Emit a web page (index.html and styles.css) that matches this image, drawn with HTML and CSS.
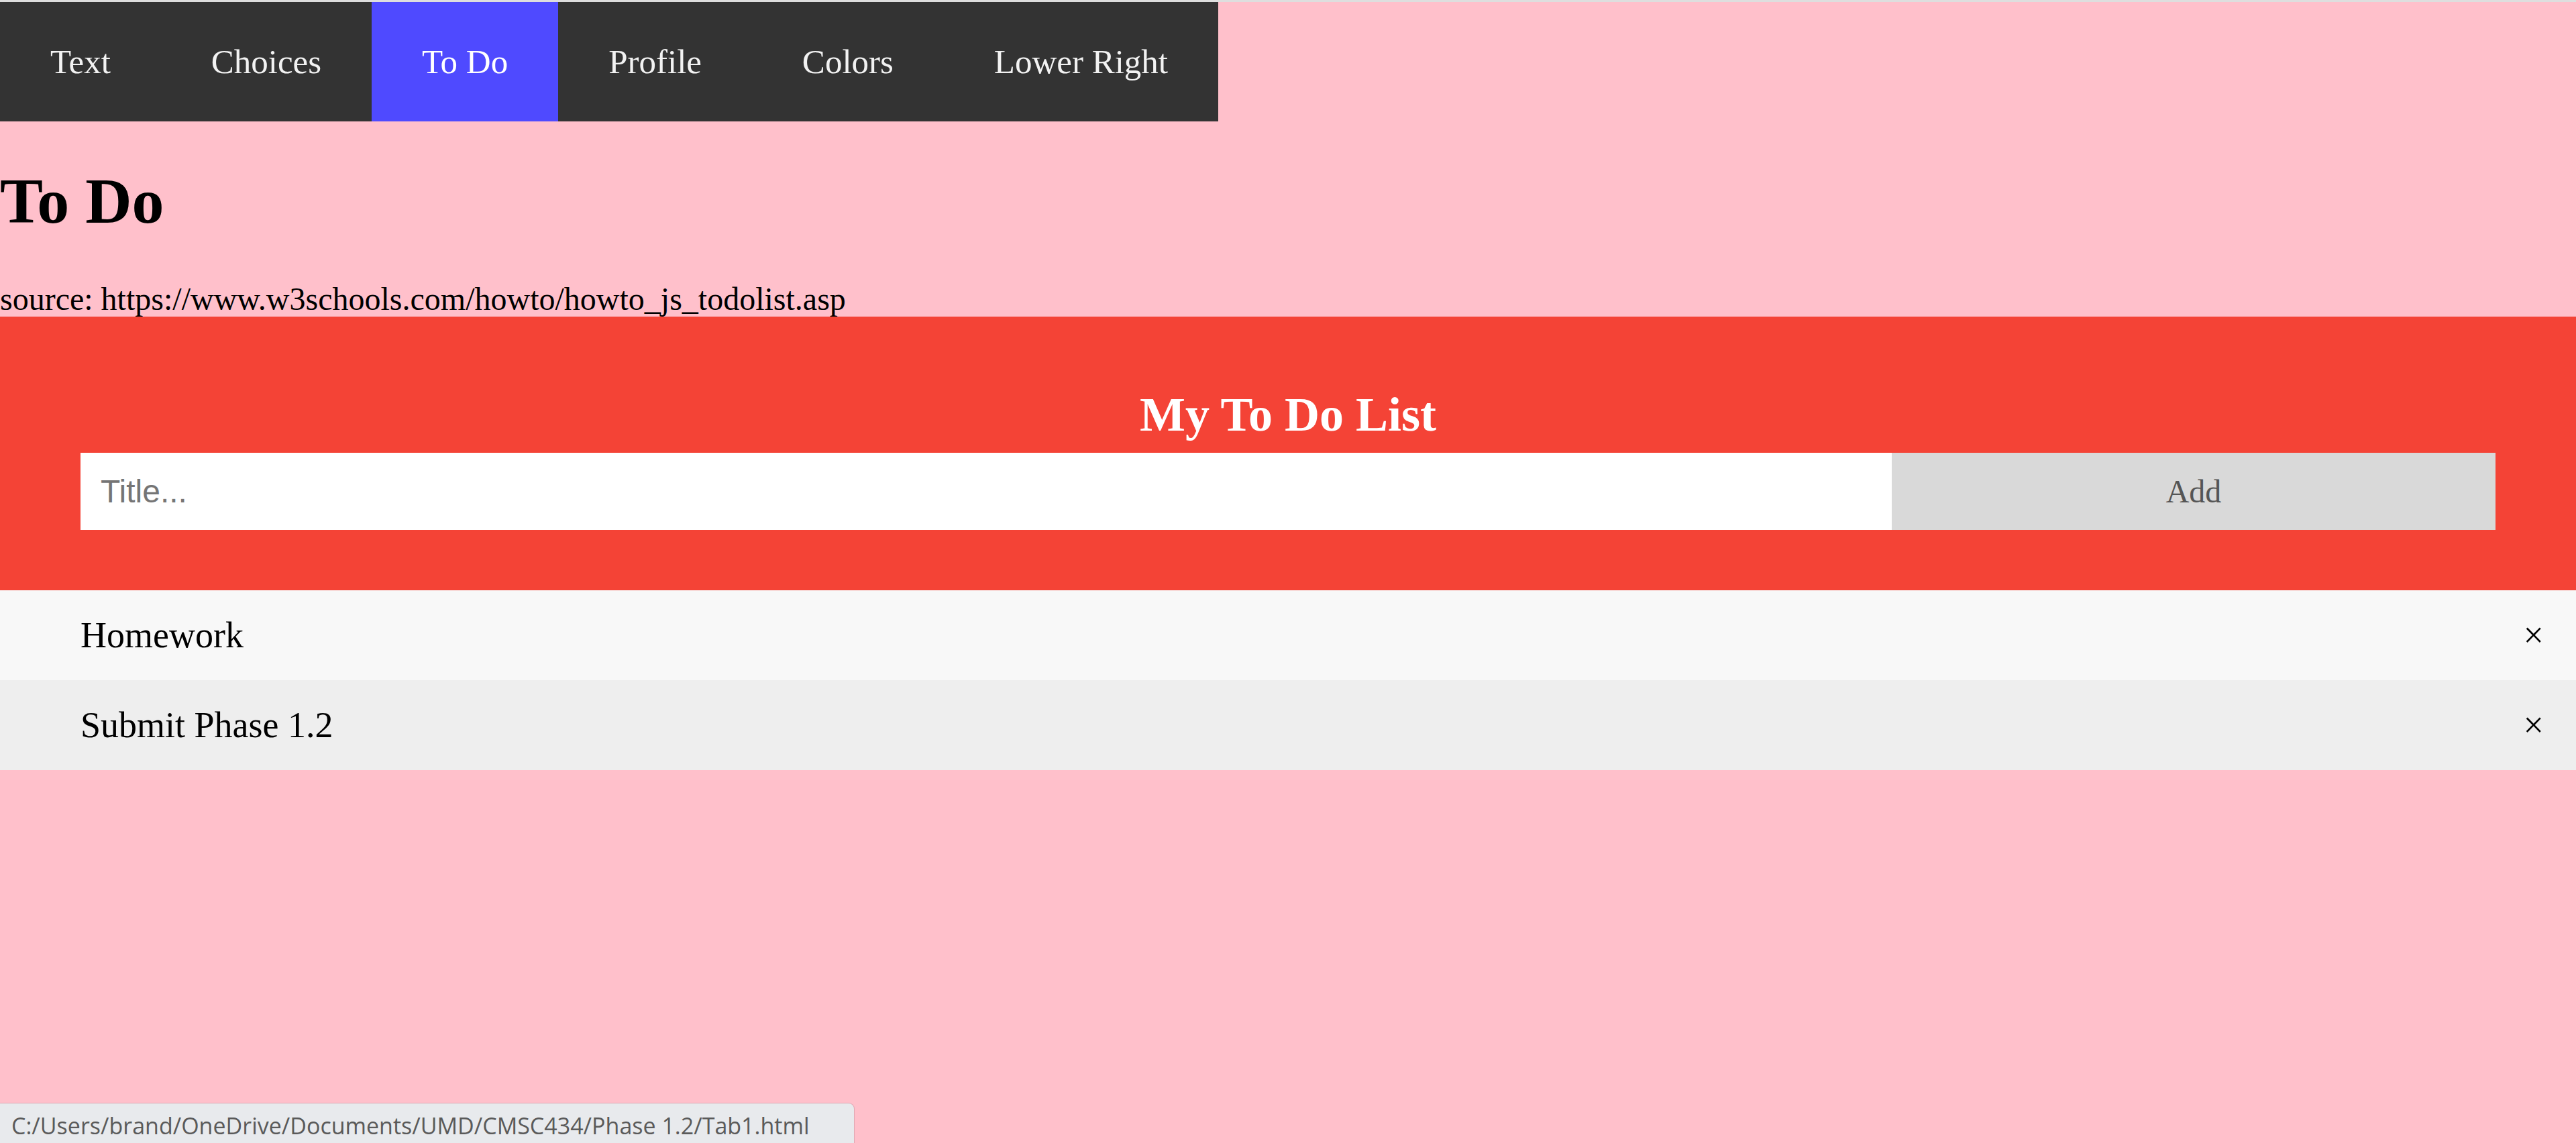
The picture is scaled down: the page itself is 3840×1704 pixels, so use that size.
FILE: index.html
```html
<!DOCTYPE html>
<html>
<head>
<meta charset="utf-8">
<title>Tab1</title>
<link rel="stylesheet" href="styles.css">
</head>
<body>
<div class="chrome-strip"></div>
<nav class="topnav">
  <a class="tab">Text</a>
  <a class="tab">Choices</a>
  <a class="tab active">To Do</a>
  <a class="tab">Profile</a>
  <a class="tab">Colors</a>
  <a class="tab">Lower Right</a>
</nav>
<h1 class="page-title">To Do</h1>
<div class="source">source: https://www.w3schools.com/howto/howto_js_todolist.asp</div>
<div class="header">
  <h2 class="header-title">My To Do List</h2>
  <div class="add-row">
    <input class="title-input" type="text" placeholder="Title...">
    <span class="add-btn">Add</span>
  </div>
</div>
<ul class="todo-list">
  <li class="todo-item">Homework<span class="close">×</span></li>
  <li class="todo-item">Submit Phase 1.2<span class="close">×</span></li>
</ul>
<div class="status-bubble">C:/Users/brand/OneDrive/Documents/UMD/CMSC434/Phase 1.2/Tab1.html</div>
</body>
</html>
```
FILE: styles.css
```css
html, body {
  margin: 0;
  padding: 0;
}
body {
  background: #ffc0cb;
  font-family: "Liberation Serif", "Times New Roman", serif;
  color: #000;
  height: 1704px;
  overflow: hidden;
  position: relative;
}
.chrome-strip {
  height: 3px;
  background: #dedede;
}
.topnav {
  display: flex;
  width: 1816px;
  background: #333333;
}
.tab {
  padding: 60px 0;
  flex: 1 1 auto;
  text-align: center;
  font-size: 51px;
  line-height: 58px;
  color: #f2f2f2;
  padding-left: 74px;
  padding-right: 74px;
}
.tab.active {
  background: #4f4aff;
  color: #ffffff;
}
.page-title {
  font-size: 96px;
  font-weight: bold;
  margin: 64px 0 64px 0;
  line-height: 110px;
}
.source {
  font-size: 48px;
  line-height: 53px;
}
.header {
  background: #f44336;
  padding: 90px 120px;
  color: #fff;
  text-align: center;
}
.header-title {
  margin: 15px;
  font-size: 72px;
  line-height: 83px;
  font-weight: bold;
}
.add-row {
  display: flex;
}
.title-input {
  box-sizing: border-box;
  width: 75%;
  margin: 0;
  border: none;
  border-radius: 0;
  padding: 30px 30px;
  font-family: "Liberation Sans", Arial, sans-serif;
  font-size: 48px;
  line-height: 55px;
  height: 115px;
  outline: none;
  background: #fff;
}
.title-input::placeholder {
  color: #757575;
}
.add-btn {
  box-sizing: border-box;
  width: 25%;
  padding: 30px;
  background: #d9d9d9;
  color: #555;
  text-align: center;
  font-size: 48px;
  line-height: 55px;
}
.todo-list {
  margin: 0;
  padding: 0;
  list-style: none;
}
.todo-item {
  position: relative;
  padding: 36px 24px 36px 120px;
  background: #eeeeee;
  font-size: 54px;
  line-height: 62px;
}
.todo-item:nth-child(odd) {
  background: #f8f8f8;
}
.close {
  position: absolute;
  right: 0;
  top: 0;
  padding: 36px 48px;
}
.status-bubble {
  position: absolute;
  left: 0;
  bottom: 0;
  width: 1274px;
  height: 60px;
  box-sizing: border-box;
  background: #e8eaed;
  border-top: 1px solid #e0a6b2;
  border-right: 1px solid #e0a6b2;
  border-top-right-radius: 9px;
  padding: 9px 0 0 17px;
  font-family: "Open Sans", "Noto Sans", sans-serif;
  font-size: 34px;
  line-height: 48px;
  color: #5a5a5a;
  white-space: nowrap;
}
```
